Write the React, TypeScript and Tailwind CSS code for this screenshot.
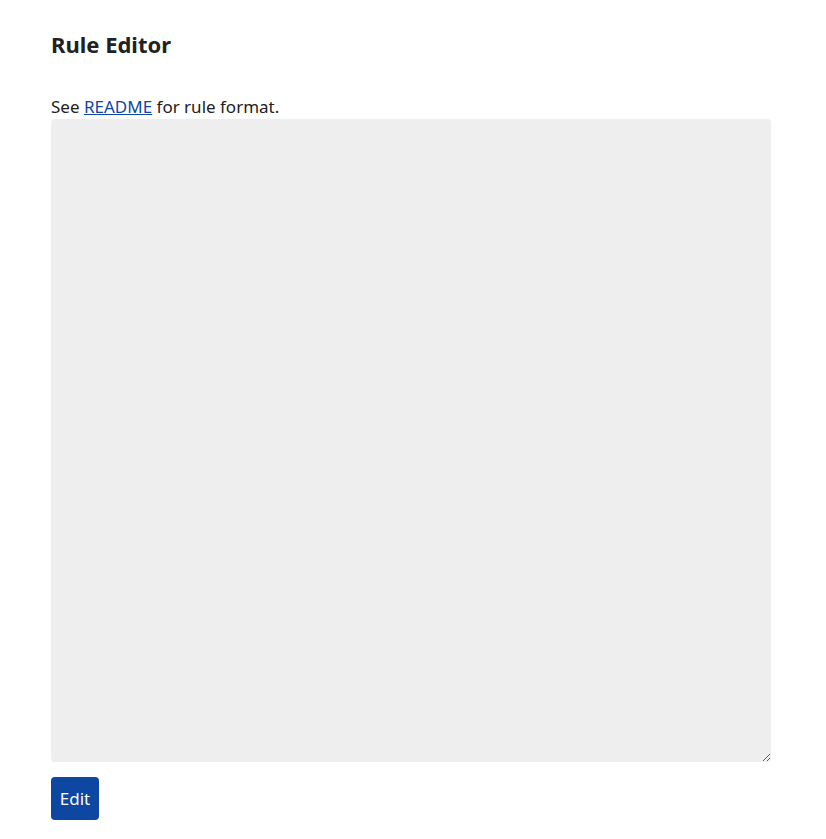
import React from "react";

export default function App() {
  return (
    <div className="min-h-screen bg-white text-[#212121]" style={{ fontFamily: '"Noto Sans", "Open Sans", sans-serif' }}>
      <div className="pl-[51px] pt-[30px] w-[771px]">
        <h1 className="text-[22px] font-bold leading-[28px] m-0">Rule Editor</h1>
        <p className="mt-[36px] text-[17px] leading-[25px]">
          See <a href="#" className="text-[#0d47a1] underline">README</a> for rule format.
        </p>
        <textarea className="block w-[720px] h-[643px] bg-[#eeeeee] rounded-[4px] border-0 outline-none resize-y" />
        <button className="mt-[15px] w-[48px] h-[43px] rounded-[4px] bg-[#0d47a1] text-white text-[17px]">Edit</button>
      </div>
    </div>
  );
}
